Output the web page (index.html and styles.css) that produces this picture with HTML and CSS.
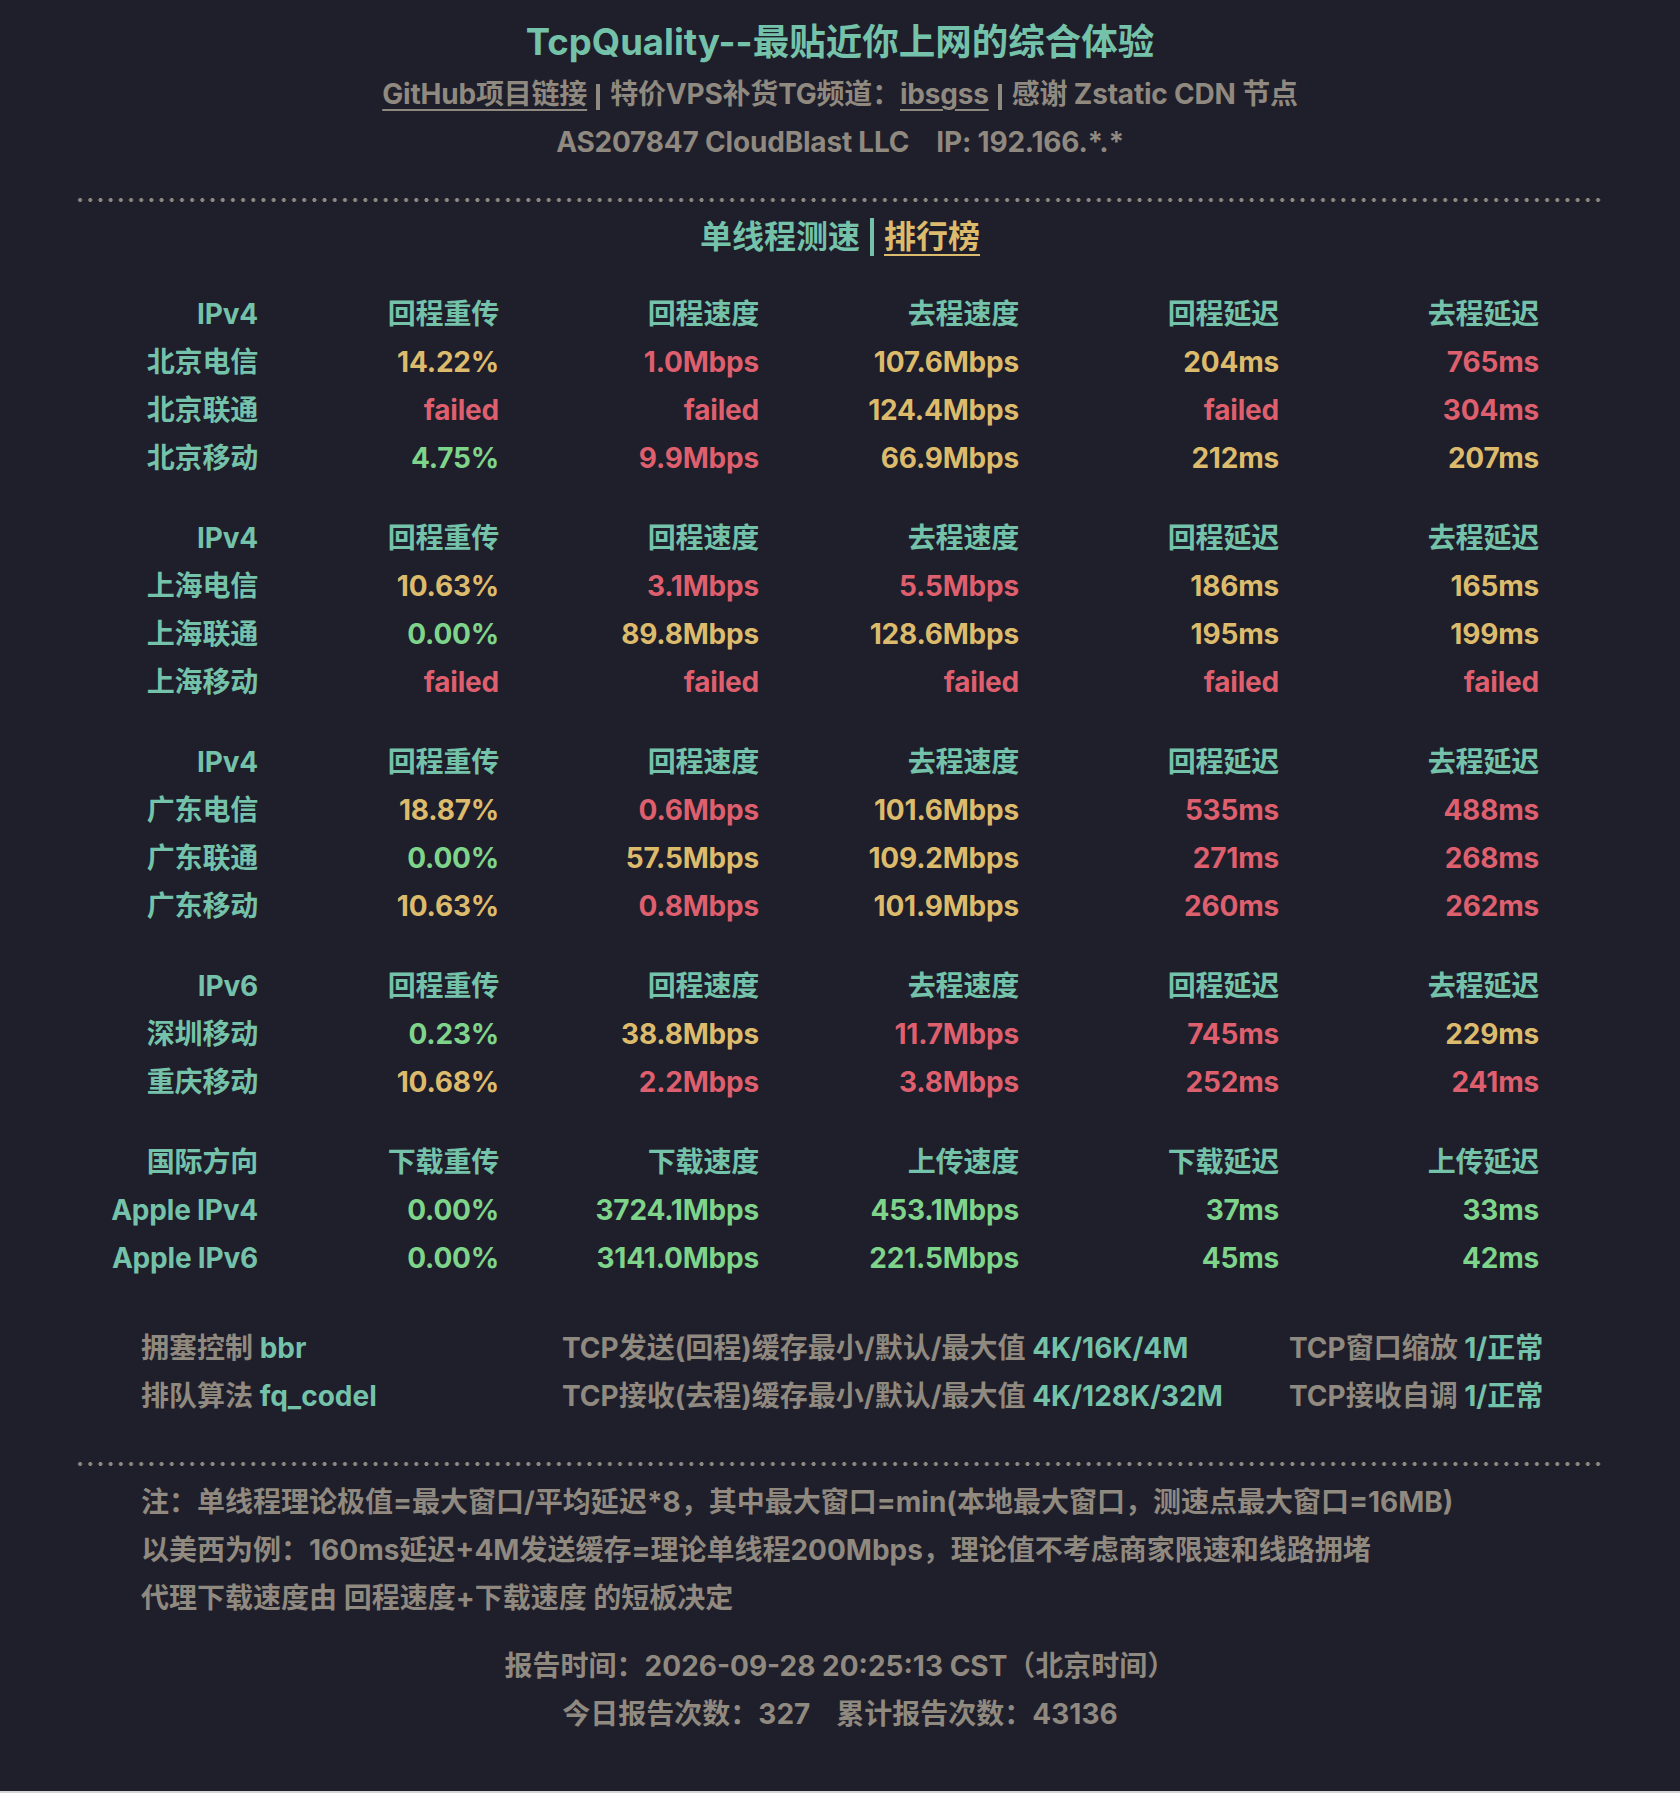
FILE: index.html
```html
<!DOCTYPE html>
<html lang="zh-CN">
<head>
<meta charset="utf-8">
<title>TcpQuality</title>
<link rel="stylesheet" href="styles.css">
</head>
<body>
<div class="page">
  <header class="hero">
    <h1 class="title">TcpQuality--最贴近你上网的综合体验</h1>
    <p class="links"><a class="link" href="#">GitHub项目链接</a><span class="bar"></span>特价VPS补货TG频道：<a class="link" href="#">ibsgss</a><span class="bar"></span>感谢 Zstatic CDN 节点</p>
    <p class="asn">AS207847 CloudBlast LLC<span class="gap"></span>IP: 192.166.*.*</p>
  </header>

  <div class="dots"></div>

  <h2 class="tabs"><span>单线程测速</span><span class="bar tbar"></span><a class="rank" href="#">排行榜</a></h2>

  <section class="grid">
    <div class="h">IPv4</div><div class="h">回程重传</div><div class="h">回程速度</div><div class="h">去程速度</div><div class="h">回程延迟</div><div class="h">去程延迟</div>
    <div class="h">北京电信</div><div class="y">14.22%</div><div class="r">1.0Mbps</div><div class="y">107.6Mbps</div><div class="y">204ms</div><div class="r">765ms</div>
    <div class="h">北京联通</div><div class="r">failed</div><div class="r">failed</div><div class="y">124.4Mbps</div><div class="r">failed</div><div class="r">304ms</div>
    <div class="h">北京移动</div><div class="g">4.75%</div><div class="r">9.9Mbps</div><div class="y">66.9Mbps</div><div class="y">212ms</div><div class="y">207ms</div>
  </section>

  <section class="grid">
    <div class="h">IPv4</div><div class="h">回程重传</div><div class="h">回程速度</div><div class="h">去程速度</div><div class="h">回程延迟</div><div class="h">去程延迟</div>
    <div class="h">上海电信</div><div class="y">10.63%</div><div class="r">3.1Mbps</div><div class="r">5.5Mbps</div><div class="y">186ms</div><div class="y">165ms</div>
    <div class="h">上海联通</div><div class="g">0.00%</div><div class="y">89.8Mbps</div><div class="y">128.6Mbps</div><div class="y">195ms</div><div class="y">199ms</div>
    <div class="h">上海移动</div><div class="r">failed</div><div class="r">failed</div><div class="r">failed</div><div class="r">failed</div><div class="r">failed</div>
  </section>

  <section class="grid">
    <div class="h">IPv4</div><div class="h">回程重传</div><div class="h">回程速度</div><div class="h">去程速度</div><div class="h">回程延迟</div><div class="h">去程延迟</div>
    <div class="h">广东电信</div><div class="y">18.87%</div><div class="r">0.6Mbps</div><div class="y">101.6Mbps</div><div class="r">535ms</div><div class="r">488ms</div>
    <div class="h">广东联通</div><div class="g">0.00%</div><div class="y">57.5Mbps</div><div class="y">109.2Mbps</div><div class="r">271ms</div><div class="r">268ms</div>
    <div class="h">广东移动</div><div class="y">10.63%</div><div class="r">0.8Mbps</div><div class="y">101.9Mbps</div><div class="r">260ms</div><div class="r">262ms</div>
  </section>

  <section class="grid">
    <div class="h">IPv6</div><div class="h">回程重传</div><div class="h">回程速度</div><div class="h">去程速度</div><div class="h">回程延迟</div><div class="h">去程延迟</div>
    <div class="h">深圳移动</div><div class="g">0.23%</div><div class="y">38.8Mbps</div><div class="r">11.7Mbps</div><div class="r">745ms</div><div class="y">229ms</div>
    <div class="h">重庆移动</div><div class="y">10.68%</div><div class="r">2.2Mbps</div><div class="r">3.8Mbps</div><div class="r">252ms</div><div class="r">241ms</div>
  </section>

  <section class="grid">
    <div class="h">国际方向</div><div class="h">下载重传</div><div class="h">下载速度</div><div class="h">上传速度</div><div class="h">下载延迟</div><div class="h">上传延迟</div>
    <div class="h">Apple IPv4</div><div class="g">0.00%</div><div class="g">3724.1Mbps</div><div class="g">453.1Mbps</div><div class="g">37ms</div><div class="g">33ms</div>
    <div class="h">Apple IPv6</div><div class="g">0.00%</div><div class="g">3141.0Mbps</div><div class="g">221.5Mbps</div><div class="g">45ms</div><div class="g">42ms</div>
  </section>

  <div class="settings">
    <div>拥塞控制 <span class="t">bbr</span></div>
    <div>TCP发送(回程)缓存最小/默认/最大值 <span class="t">4K/16K/4M</span></div>
    <div>TCP窗口缩放 <span class="t">1/正常</span></div>
    <div>排队算法 <span class="t">fq_codel</span></div>
    <div>TCP接收(去程)缓存最小/默认/最大值 <span class="t">4K/128K/32M</span></div>
    <div>TCP接收自调 <span class="t">1/正常</span></div>
  </div>

  <div class="dots dots2"></div>

  <div class="notes">
    <p>注：单线程理论极值=最大窗口/平均延迟*8，其中最大窗口=min(本地最大窗口，测速点最大窗口=16MB)</p>
    <p>以美西为例：160ms延迟+4M发送缓存=理论单线程200Mbps，理论值不考虑商家限速和线路拥堵</p>
    <p>代理下载速度由 回程速度+下载速度 的短板决定</p>
  </div>

  <footer class="foot">
    <p>报告时间：2026-09-28 20:25:13 CST（北京时间）</p>
    <p>今日报告次数：327<span class="gap2"></span>累计报告次数：43136</p>
  </footer>
</div>
</body>
</html>
```

FILE: styles.css
```css
html {
  background: #d4d4d4;
}
body {
  margin: 0 0 2px;
  background: #1f1e2b;
  color: #8f897f;
  font-family: Inter, "Noto Sans CJK SC", sans-serif;
  font-weight: 700;
  font-size: 28px;
  min-height: 1791px;
}
.page {
  width: 1530px;
  margin: 0 auto;
  padding-bottom: 52px;
}
.hero {
  padding-top: 14px;
  text-align: center;
}
.title {
  margin: 0;
  font-size: 36.5px;
  line-height: 56px;
  font-weight: 700;
  color: #74c2a9;
}
.links, .asn {
  margin: 0;
  font-size: 28px;
  line-height: 48px;
  letter-spacing: -0.2px;
}
.link {
  color: inherit;
  text-decoration: underline;
  text-decoration-thickness: 2px;
  text-underline-offset: 5px;
}
.bar {
  display: inline-block;
  width: 4px;
  height: 26px;
  margin: 0 10px 0 9px;
  background: #8f897f;
  vertical-align: -6px;
}
.gap { display: inline-block; width: 27px; }
.gap2 { display: inline-block; width: 26px; }
.dots {
  height: 4px;
  margin-top: 32px;
  background-image: radial-gradient(circle at center, #8f897f 1.7px, rgba(143,137,127,0) 2.3px);
  background-size: 10.19px 4px;
  background-repeat: repeat-x;
}
.tabs {
  margin: 11px 0 0;
  text-align: center;
  font-size: 32px;
  line-height: 48px;
  font-weight: 700;
  color: #74c2a9;
}
.tbar {
  height: 38px;
  width: 4px;
  margin: 0 10px 0 10px;
  background: #74c2a9;
  vertical-align: -8px;
}
.rank {
  color: #ddbb6c;
  text-decoration: underline;
  text-decoration-thickness: 2px;
  text-underline-offset: 6px;
}
.grid {
  display: grid;
  grid-template-columns: 183px 241px repeat(4, 260px);
  grid-auto-rows: 48px;
  padding: 0 66px 0 0;
  margin-top: 32px;
  line-height: 48px;
  text-align: right;
  white-space: nowrap;
  letter-spacing: -0.2px;
}
.tabs + .grid { margin-top: 29px; }
.h { color: #74c2a9; }
.y { color: #ddbb6c; }
.r { color: #de5f6d; }
.g { color: #7fd48b; }
.settings {
  display: grid;
  grid-template-columns: 421px 727px auto;
  grid-auto-rows: 48px;
  padding: 0 66px;
  margin-top: 42px;
  line-height: 48px;
  white-space: nowrap;
}
.t { color: #74c2a9; }
.dots2 { margin-top: 42px; }
.notes {
  padding: 0 66px;
  margin-top: 12px;
}
.notes p, .foot p {
  margin: 0;
  line-height: 48px;
  white-space: nowrap;
}
.foot {
  margin-top: 20px;
  text-align: center;
}
```
